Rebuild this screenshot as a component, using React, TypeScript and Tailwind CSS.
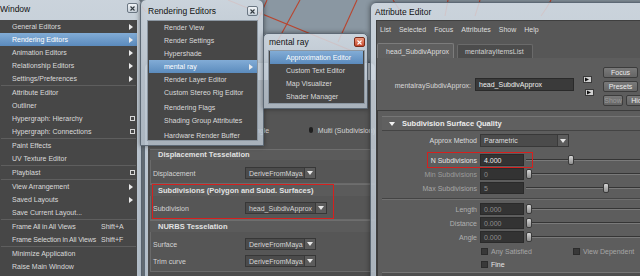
import React from "react";

type Item = {
  label?: string;
  arrow?: boolean;
  box?: boolean;
  shortcut?: string;
  on?: boolean;
  sep?: boolean;
};

const windowItems: Item[] = [
  { label: "General Editors", arrow: true },
  { label: "Rendering Editors", arrow: true, on: true },
  { label: "Animation Editors", arrow: true },
  { label: "Relationship Editors", arrow: true },
  { label: "Settings/Preferences", arrow: true },
  { sep: true },
  { label: "Attribute Editor" },
  { label: "Outliner" },
  { label: "Hypergraph: Hierarchy", box: true },
  { label: "Hypergraph: Connections", box: true },
  { sep: true },
  { label: "Paint Effects" },
  { label: "UV Texture Editor" },
  { sep: true },
  { label: "Playblast", box: true },
  { sep: true },
  { label: "View Arrangement", arrow: true },
  { label: "Saved Layouts", arrow: true },
  { label: "Save Current Layout..." },
  { sep: true },
  { label: "Frame All in All Views", shortcut: "Shift+A" },
  { label: "Frame Selection in All Views", shortcut: "Shift+F" },
  { sep: true },
  { label: "Minimize Application" },
  { label: "Raise Main Window" },
  { label: "Raise Application Windows" },
];

const renderingItems: Item[] = [
  { label: "Render View" },
  { label: "Render Settings" },
  { label: "Hypershade" },
  { label: "mental ray", arrow: true, on: true },
  { label: "Render Layer Editor" },
  { label: "Custom Stereo Rig Editor" },
  { sep: true },
  { label: "Rendering Flags" },
  { label: "Shading Group Attributes" },
  { sep: true },
  { label: "Hardware Render Buffer" },
];

const mentalRayItems: Item[] = [
  { label: "Approximation Editor", on: true },
  { label: "Custom Text Editor" },
  { label: "Map Visualizer" },
  { label: "Shader Manager" },
];

const frameBg =
  "bg-gradient-to-b from-[#d6dee6]/85 via-[#c3cdd7]/85 to-[#b7c2cd]/85 border border-[#5d6975] shadow-[0_0_5px_rgba(0,0,0,0.45)]";

const Arrow = () => (
  <svg width="4" height="6" viewBox="0 0 4 6">
    <path d="M0 0L4 3L0 6Z" fill="#ececec" />
  </svg>
);

const DownArrow = ({ color = "#e8e8e8" }: { color?: string }) => (
  <svg width="6" height="4" viewBox="0 0 6 4">
    <path d="M0 0H6L3 4Z" fill={color} />
  </svg>
);

const CloseBtn = ({ red }: { red?: boolean }) => (
  <div
    className={
      red
        ? "flex h-[10px] w-[11px] items-center justify-center rounded-[2px] border border-[#7a2a18] bg-gradient-to-b from-[#ee9a7e] to-[#c4452a]"
        : "flex h-[10px] w-[11px] items-center justify-center rounded-[2px] border border-[#6b7783] bg-gradient-to-b from-[#f1f4f7] to-[#c7d0d9]"
    }
  >
    <svg width="5" height="5" viewBox="0 0 5 5">
      <path d="M0.5 0.5L4.5 4.5M4.5 0.5L0.5 4.5" stroke={red ? "#ffffff" : "#333a40"} strokeWidth="1.1" />
    </svg>
  </div>
);

function MenuList({ items, textPad, sepClass }: { items: Item[]; textPad: string; sepClass: string }) {
  return (
    <>
      {items.map((it, i) =>
        it.sep ? (
          <div key={i} className={`h-px bg-[#5e5e5e] ${sepClass}`} />
        ) : (
          <div
            key={i}
            className={`flex h-[13px] shrink-0 items-center ${
              it.on ? "bg-gradient-to-b from-[#82acd6] to-[#5b8bbd] text-white" : "text-[#dadada]"
            }`}
          >
            <span
              className={`${it.shortcut ? "w-[100px] tracking-[-0.15px]" : "flex-1"} whitespace-nowrap ${textPad}`}
            >
              {it.label}
            </span>
            {it.shortcut && <span className="ml-[1px] flex-1 whitespace-nowrap">{it.shortcut}</span>}
            {it.arrow && (
              <span className="mr-[4px] flex">
                <Arrow />
              </span>
            )}
            {it.box && <span className="mr-[2px] h-[5px] w-[5px] border border-[#d8d8d8]" />}
          </div>
        )
      )}
    </>
  );
}

function Viewport() {
  return (
    <svg className="absolute inset-0" width="640" height="276" viewBox="0 0 640 276">
      <g stroke="#b9452f" strokeWidth="1.1" fill="none">
        <path d="M267 0L252 34" />
        <path d="M228 0L362 55" />
        <path d="M300 0L277 42" />
        <path d="M357 0L338 42" />
        <path d="M393 0Q398 8 404 16" />
        <path d="M448 0L445 16" />
        <path d="M480 0L475 16" />
        <path d="M551 0Q547 8 541 16" />
        <path d="M140 4L146 12" />
      </g>
    </svg>
  );
}

function WindowMenu() {
  return (
    <div className={`absolute left-[-8px] top-[-2px] flex h-[292px] w-[150px] flex-col rounded-t-[6px] ${frameBg}`}>
      <div className="relative flex h-[21px] shrink-0 items-center pl-[7px] text-[8.5px] text-[#111]">
        Window
        <div className="absolute right-[3px] top-[4px]">
          <CloseBtn />
        </div>
      </div>
      <div className="ml-[7px] mr-[4px] flex flex-1 flex-col bg-[#474747]">
        <MenuList items={windowItems} textPad="pl-[12px]" sepClass="mx-[1px]" />
      </div>
    </div>
  );
}

function RenderingEditors() {
  return (
    <div className={`absolute left-[140px] top-[-1px] flex h-[147px] w-[124px] flex-col rounded-t-[6px] ${frameBg}`}>
      <div className="relative flex h-[20px] shrink-0 items-center pl-[7px] pt-[2px] text-[8.5px] text-[#111]">
        Rendering Editors
        <div className="absolute right-[5px] top-[6px]">
          <CloseBtn />
        </div>
      </div>
      <div className="ml-[6px] mr-[5px] flex h-[121px] flex-col border border-[#8c97a2] bg-[#474747] pl-px">
        <MenuList items={renderingItems} textPad="pl-[15px]" sepClass="mx-[3px] my-px" />
      </div>
    </div>
  );
}

function MentalRay() {
  return (
    <div className={`absolute left-[263px] top-[33px] flex h-[76px] w-[105px] flex-col rounded-t-[5px] ${frameBg}`}>
      <div className="relative flex h-[16px] shrink-0 items-center pl-[5px] pt-[1px] text-[8.5px] text-[#111]">
        mental ray
        <div className="absolute right-[2px] top-[3px]">
          <CloseBtn red />
        </div>
      </div>
      <div className="ml-[4px] mr-[2px] flex flex-col border border-[#8c97a2] bg-[#474747] px-px">
        <MenuList items={mentalRayItems} textPad="pl-[16px]" sepClass="" />
      </div>
    </div>
  );
}

const Dropdown = ({ value, w }: { value: string; w: string }) => (
  <div className={`flex h-[12px] ${w} border border-[#373737] bg-[#4b4b4b] text-[#d6d6d6]`}>
    <span className="flex flex-1 items-center overflow-hidden whitespace-nowrap pl-[3px]">{value}</span>
    <span className="flex w-[11px] items-center justify-center border-l border-[#3a3a3a] bg-[#5c5c5c]">
      <DownArrow />
    </span>
  </div>
);

function PanelHeader({ title, h }: { title: string; h: string }) {
  return (
    <div className={`flex ${h} items-center border-t border-[#6e6e6e] bg-[#5b5b5b] pl-[8px] text-[7.5px] font-bold text-[#e2e2e2]`}>
      {title}
    </div>
  );
}

function PanelRow({ label, children }: { label: string; children: React.ReactNode }) {
  return (
    <div className="flex h-[12px] items-center">
      <span className="w-[94px] pl-[2px]">{label}</span>
      {children}
    </div>
  );
}

function ApproxPanel() {
  return (
    <div className={`absolute left-[144px] top-[62px] flex h-[230px] w-[232px] flex-col rounded-t-[6px] ${frameBg}`}>
      <div className="h-[17px] shrink-0" />
      <div className="ml-[3px] flex flex-1 flex-col bg-[#4d4d4d] text-[#d4d4d4]">
        <div className="h-[69px] shrink-0 bg-[#555555] pt-[44px]">
          <div className="flex h-[12px] items-center">
            <span className="ml-[94px] h-[6px] w-[6px] rounded-full border border-[#7a7a7a] bg-[#2d2d2d]" />
            <span className="ml-[3px] w-[86px]">Single</span>
            <span className="h-[6px] w-[6px] rounded-full bg-[#1f1f1f]" />
            <span className="ml-[5px] whitespace-nowrap">Multi (Subdivision)</span>
          </div>
        </div>
        <div className="flex flex-col pl-[2px]">
          <PanelHeader title="Displacement Tesselation" h="h-[11px]" />
          <div className="h-[24px] border-b border-l border-[#6a6a6a] bg-[#565656] pt-[7px]">
            <PanelRow label="Displacement">
              <Dropdown value="DeriveFromMaya" w="w-[71px]" />
            </PanelRow>
          </div>
          <PanelHeader title="Subdivisions (Polygon and Subd. Surfaces)" h="h-[12px]" />
          <div className="h-[24px] border-b border-l border-[#6a6a6a] bg-[#565656] pt-[6px]">
            <PanelRow label="Subdivision">
              <Dropdown value="head_SubdivApprox" w="w-[82px]" />
            </PanelRow>
          </div>
          <PanelHeader title="NURBS Tesselation" h="h-[12px]" />
          <div className="flex h-[40px] flex-col gap-[5px] border-b border-l border-[#6a6a6a] bg-[#565656] pt-[6px]">
            <PanelRow label="Surface">
              <Dropdown value="DeriveFromMaya" w="w-[71px]" />
            </PanelRow>
            <PanelRow label="Trim curve">
              <Dropdown value="DeriveFromMaya" w="w-[71px]" />
            </PanelRow>
          </div>
        </div>
      </div>
    </div>
  );
}

const Field = ({ value, dim }: { value: string; dim?: boolean }) => (
  <div
    className={`flex h-[12px] w-[44px] shrink-0 items-center border border-[#2a2a2a] bg-[#333333] pl-[3px] ${
      dim ? "text-[#8e8e8e]" : "text-[#ededed]"
    }`}
  >
    {value}
  </div>
);

const Slider = ({ at }: { at: number }) => (
  <div className="relative ml-[2px] h-[12px] flex-1">
    <div className="absolute left-0 right-0 top-[5px] h-[2px] border-b border-[#7a7a7a] bg-[#353535]" />
    <div
      className="absolute top-[1px] h-[10px] w-[6px] rounded-[2px] border border-[#3a3a3a] bg-gradient-to-b from-[#d6d6d6] to-[#8e8e8e]"
      style={{ left: at }}
    />
  </div>
);

const Check = () => <span className="h-[7px] w-[7px] shrink-0 border border-[#2b2b2b] bg-[#383838]" />;

function AttrRow({ label, tone, h, children }: { label: string; tone: string; h: string; children: React.ReactNode }) {
  return (
    <div className={`flex ${h} items-center`}>
      <div className={`w-[96px] shrink-0 whitespace-nowrap pr-px text-right ${tone}`}>{label}</div>
      <div className="ml-[2px] flex flex-1 items-center">{children}</div>
    </div>
  );
}

const SmallBtn = ({ label, w, dim }: { label: string; w: string; dim?: boolean }) => (
  <div
    className={`flex h-[11px] ${w} shrink-0 items-center justify-center rounded-[2px] border border-[#3c3c3c] bg-gradient-to-b from-[#7a7a7a] to-[#656565] ${
      dim ? "text-[#9a9a9a]" : "text-[#ececec]"
    }`}
  >
    {label}
  </div>
);

const IconBtn = () => (
  <svg width="9" height="7" viewBox="0 0 9 7">
    <rect x="0.5" y="0.5" width="8" height="6" fill="#cfcfcf" stroke="#3a3a3a" />
    <path d="M2 1.5L6 3.5L2 5.5Z" fill="#111" />
  </svg>
);

function AttributeEditor() {
  return (
    <div className={`absolute left-[370px] top-[2px] flex h-[285px] w-[280px] flex-col rounded-t-[6px] ${frameBg}`}>
      <div className="flex h-[17px] shrink-0 items-center pl-[4px] pt-[1px] text-[8.5px] text-[#111]">
        Attribute Editor
      </div>
      <div className="ml-[5px] flex flex-1 flex-col border-l border-t border-[#3f3f3f] bg-[#575757] text-[#dedede]">
        <div className="flex h-[17px] shrink-0 items-center gap-[8px] pl-[3px]">
          <span>List</span>
          <span>Selected</span>
          <span>Focus</span>
          <span>Attributes</span>
          <span>Show</span>
          <span>Help</span>
        </div>
        <div className="mt-[5px] flex h-[15px] shrink-0 items-end">
          <div className="flex h-[15px] w-[77px] items-center rounded-t-[2px] border-l border-r border-t border-[#7c7c7c] bg-[#5f5f5f] pl-[8px]">
            head_SubdivApprox
          </div>
          <div className="ml-[3px] flex h-[14px] w-[76px] items-center rounded-t-[2px] border-l border-r border-t border-[#6a6a6a] bg-[#4c4c4c] pl-[7px] text-[#d0d0d0]">
            mentalrayItemsList
          </div>
        </div>
        <div className="flex flex-1 flex-col bg-[#5d5d5d]">
          <div className="flex h-[50px] shrink-0">
            <div className="w-[94px] shrink-0 whitespace-nowrap pt-[24px] text-right text-[#d8d8d8]">
              mentalraySubdivApprox:
            </div>
            <div className="ml-[4px] pt-[20px]">
              <div className="flex h-[13px] w-[99px] items-center border border-[#2a2a2a] bg-[#3a3a3a] pl-[3px] text-[#f0f0f0]">
                head_SubdivApprox
              </div>
            </div>
            <div className="ml-[9px] flex flex-col gap-[6px] pt-[18px]">
              <IconBtn />
              <span className="ml-[2px] flex">
                <IconBtn />
              </span>
            </div>
            <div className="ml-[9px] flex flex-col gap-[3px] pt-[9px]">
              <SmallBtn label="Focus" w="w-[35px]" />
              <SmallBtn label="Presets" w="w-[35px]" />
              <div className="flex gap-[3px]">
                <SmallBtn label="Show" w="w-[20px]" dim />
                <SmallBtn label="Hide" w="w-[25px]" />
              </div>
            </div>
          </div>
          <div className="mt-[2px] flex flex-1 flex-col border-l border-t border-[#3c3c3c] pl-[4px] pt-[5px]">
            <div className="flex h-[15px] shrink-0 items-center border-b border-t border-b-[#444444] border-t-[#767676] bg-[#606060] font-bold text-[7.5px] text-[#ececec]">
              <span className="ml-[7px] flex">
                <DownArrow color="#f2f2f2" />
              </span>
              <span className="ml-[7px]">Subdivision Surface Quality</span>
            </div>
            <div className="mt-[3px]">
              <AttrRow label="Approx Method" tone="text-[#dcdcdc]" h="h-[13px]">
                <div className="flex h-[13px] w-[89px] border border-[#383838] bg-[#4b4b4b] text-[#dedede]">
                  <span className="flex flex-1 items-center pl-[3px]">Parametric</span>
                  <span className="flex w-[11px] items-center justify-center border-l border-[#3a3a3a] bg-[#5c5c5c]">
                    <DownArrow />
                  </span>
                </div>
              </AttrRow>
            </div>
            <div className="mt-[6px]">
              <AttrRow label="N Subdivisions" tone="text-[#e6e6e6]" h="h-[14px]">
                <Field value="4.000" />
                <Slider at={42} />
              </AttrRow>
              <AttrRow label="Min Subdivisions" tone="text-[#9c9c9c]" h="h-[14px]">
                <Field value="0" dim />
                <Slider at={0} />
              </AttrRow>
              <AttrRow label="Max Subdivisions" tone="text-[#a8a8a8]" h="h-[14px]">
                <Field value="5" dim />
                <Slider at={77} />
              </AttrRow>
            </div>
            <div className="mt-[3px] h-[2px] border-b border-t border-b-[#707070] border-t-[#444444]" />
            <div className="mt-[2px]">
              <AttrRow label="Length" tone="text-[#b0b0b0]" h="h-[14px]">
                <Field value="0.000" dim />
                <Slider at={0} />
              </AttrRow>
              <AttrRow label="Distance" tone="text-[#b0b0b0]" h="h-[14px]">
                <Field value="0.000" dim />
                <Slider at={0} />
              </AttrRow>
              <AttrRow label="Angle" tone="text-[#b0b0b0]" h="h-[14px]">
                <Field value="0.000" dim />
                <Slider at={0} />
              </AttrRow>
            </div>
            <div className="mt-px">
              <AttrRow label="" tone="" h="h-[13px]">
                <span className="ml-px flex">
                  <Check />
                </span>
                <span className="ml-[3px] w-[82px] text-[#a6a6a6]">Any Satisfied</span>
                <Check />
                <span className="ml-[3px] whitespace-nowrap text-[#a6a6a6]">View Dependent</span>
              </AttrRow>
              <AttrRow label="" tone="" h="h-[13px]">
                <span className="ml-px flex">
                  <Check />
                </span>
                <span className="ml-[3px] text-[#e6e6e6]">Fine</span>
              </AttrRow>
            </div>
            <div className="mt-px flex-1 border-t border-[#777777] bg-[#4f4f4f]" />
          </div>
        </div>
      </div>
    </div>
  );
}

export default function App() {
  return (
    <div className="relative h-[276px] w-[640px] overflow-hidden bg-[#8a97a2] font-['Liberation_Sans',Arial,sans-serif] text-[7px] leading-none">
      <Viewport />
      <WindowMenu />
      <ApproxPanel />
      <RenderingEditors />
      <MentalRay />
      <AttributeEditor />
      <div className="absolute left-[152px] top-[184px] h-[35px] w-[182px] border border-[#d6201e]" />
      <div className="absolute left-[427px] top-[152px] h-[16px] w-[106px] border border-[#d6201e]" />
    </div>
  );
}
